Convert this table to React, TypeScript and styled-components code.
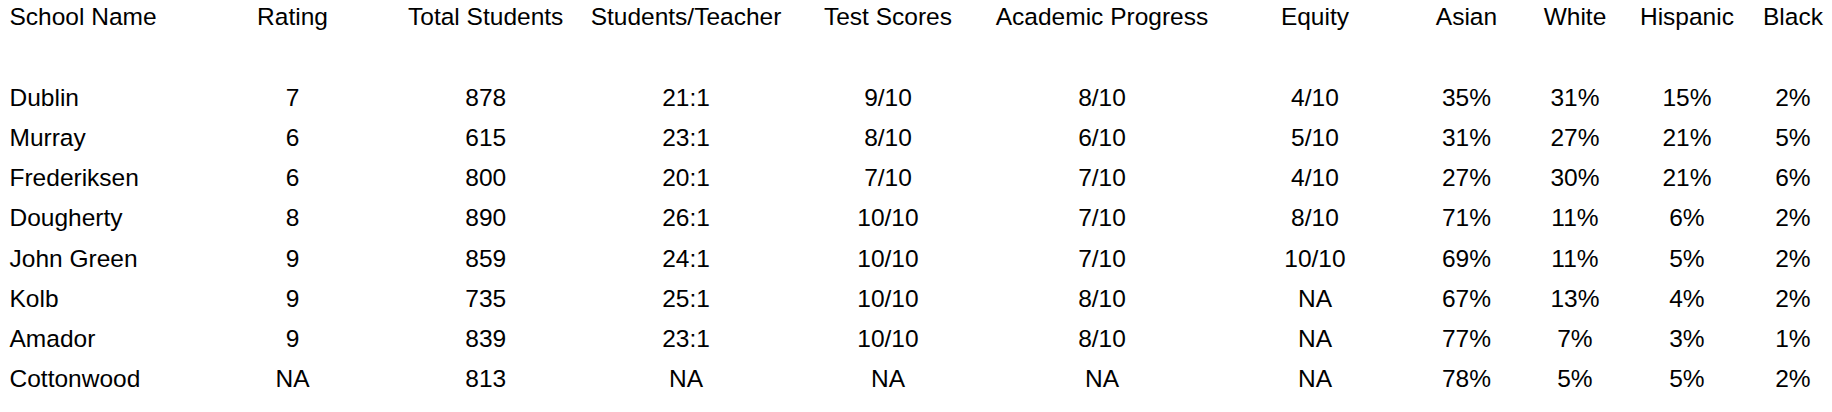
import React from "react";
import styled, { createGlobalStyle } from "styled-components";

const GlobalStyle = createGlobalStyle`
  html, body {
    margin: 0;
    padding: 0;
    background: #ffffff;
  }
  body {
    font-family: "Liberation Sans", Arial, sans-serif;
    color: #000000;
  }
`;

const COLS = [182, 221, 165.4, 235.2, 168.8, 259.2, 166.8, 136.2, 80.8, 143.2, 68.8];

const Table = styled.div`
  display: flex;
  flex-direction: column;
  width: 1832px;
  font-family: "Liberation Sans", Arial, sans-serif;
  font-size: 24.5px;
  color: #000;
`;

const Row = styled.div<{ $header?: boolean }>`
  display: grid;
  grid-template-columns: ${COLS.map((c) => `${c}px`).join(" ")};
  line-height: ${(p) => (p.$header ? "34px" : "40.2px")};
  height: ${(p) => (p.$header ? "34px" : "40.2px")};
  margin-bottom: ${(p) => (p.$header ? "43.8px" : "0")};
`;

const Cell = styled.div<{ $first?: boolean }>`
  white-space: nowrap;
  text-align: ${(p) => (p.$first ? "left" : "center")};
  padding-left: ${(p) => (p.$first ? "9.5px" : "0")};
`;

const headers = [
  "School Name",
  "Rating",
  "Total Students",
  "Students/Teacher",
  "Test Scores",
  "Academic Progress",
  "Equity",
  "Asian",
  "White",
  "Hispanic",
  "Black",
];

const rows: string[][] = [
  ["Dublin", "7", "878", "21:1", "9/10", "8/10", "4/10", "35%", "31%", "15%", "2%"],
  ["Murray", "6", "615", "23:1", "8/10", "6/10", "5/10", "31%", "27%", "21%", "5%"],
  ["Frederiksen", "6", "800", "20:1", "7/10", "7/10", "4/10", "27%", "30%", "21%", "6%"],
  ["Dougherty", "8", "890", "26:1", "10/10", "7/10", "8/10", "71%", "11%", "6%", "2%"],
  ["John Green", "9", "859", "24:1", "10/10", "7/10", "10/10", "69%", "11%", "5%", "2%"],
  ["Kolb", "9", "735", "25:1", "10/10", "8/10", "NA", "67%", "13%", "4%", "2%"],
  ["Amador", "9", "839", "23:1", "10/10", "8/10", "NA", "77%", "7%", "3%", "1%"],
  ["Cottonwood", "NA", "813", "NA", "NA", "NA", "NA", "78%", "5%", "5%", "2%"],
];

export default function App() {
  return (
    <>
      <GlobalStyle />
      <Table>
        <Row $header>
          {headers.map((h, i) => (
            <Cell key={h} $first={i === 0}>
              {h}
            </Cell>
          ))}
        </Row>
        {rows.map((r) => (
          <Row key={r[0]}>
            {r.map((v, i) => (
              <Cell key={i} $first={i === 0}>
                {v}
              </Cell>
            ))}
          </Row>
        ))}
      </Table>
    </>
  );
}
